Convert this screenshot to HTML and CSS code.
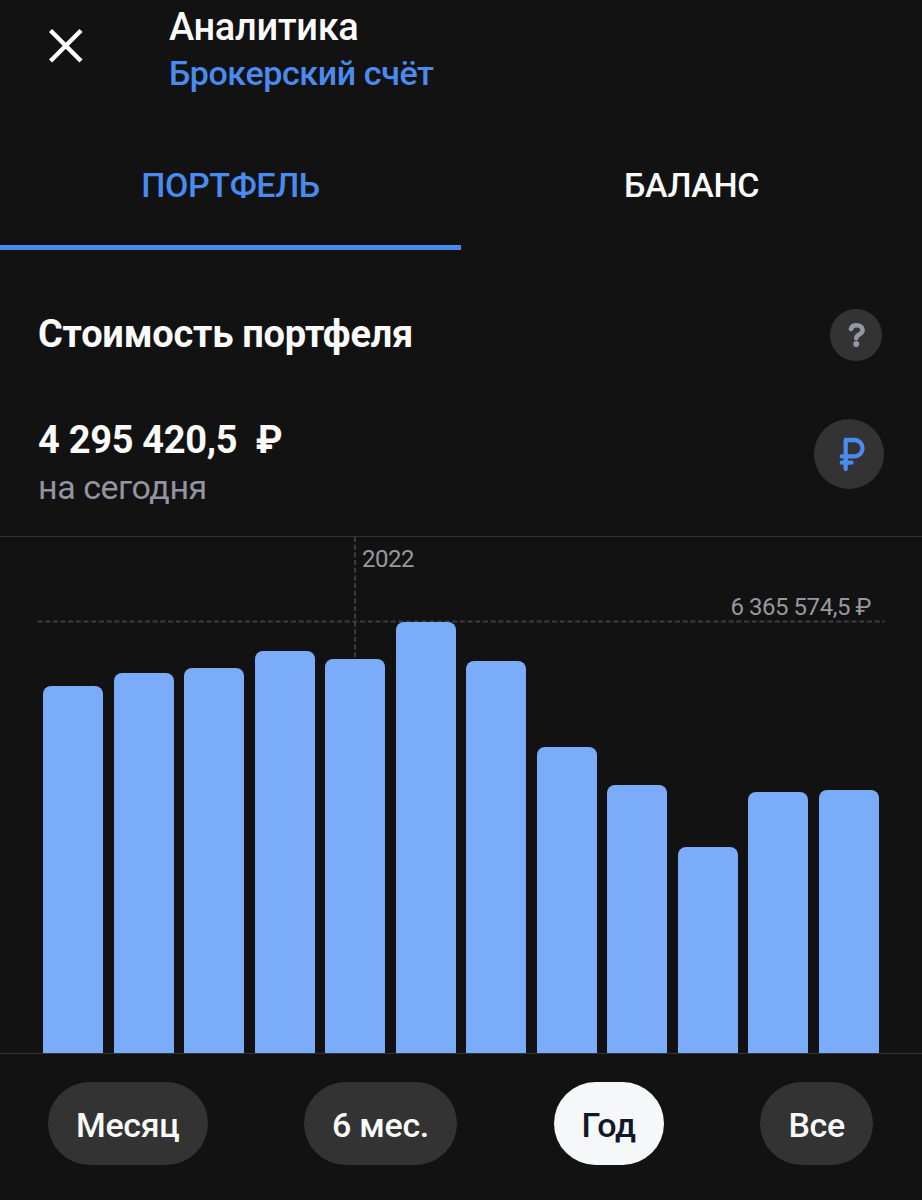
FILE: index.html
```html
<!DOCTYPE html>
<html lang="ru">
<head>
    <meta charset="UTF-8">
    <meta name="viewport" content="width=device-width, initial-scale=1.0">
    <title>Аналитика</title>
    <link rel="stylesheet" href="styles.css">
</head>
<body>

    <!-- Header -->
    <header class="header">
        <button type="button" class="close" aria-label="Закрыть">
            <svg width="34" height="34" viewBox="0 0 34 34">
                <path d="M1.5 1.5L32 32M32 1.5L1.5 32" stroke="#fff" stroke-width="4.4" fill="none"/>
            </svg>
        </button>
        <div>
            <h1>Аналитика</h1>
            <div class="account">Брокерский счёт</div>
        </div>
    </header>

    <!-- Tabs -->
    <nav class="tabs">
        <div class="tab active">ПОРТФЕЛЬ</div>
        <div class="tab">БАЛАНС</div>
    </nav>

    <!-- Portfolio value -->
    <section class="section-head">
        <h2>Стоимость портфеля</h2>
        <button type="button" class="help" aria-label="Справка">
            <svg width="52" height="52" viewBox="0 0 52 52">
                <path d="M20.9 20C21.7 17.4 23.8 16.2 26.3 16.2C30 16.2 32.6 18.2 32.6 21.2C32.6 25.2 26.2 25.4 26.2 29.2" stroke="#9299a2" stroke-width="4.6" stroke-linecap="round" fill="none"/>
                <circle cx="26.2" cy="35" r="3" fill="#9299a2"/>
            </svg>
        </button>
    </section>

    <section class="value-row">
        <div>
            <div class="value">4 295 420,5&nbsp; ₽</div>
            <div class="today">на сегодня</div>
        </div>
        <button type="button" class="currency" aria-label="Валюта">
            <svg width="70" height="70" viewBox="0 0 70 70">
                <path d="M31.7 50V21H40.3C45 21 48.5 24.5 48.5 29.2C48.5 33.9 45 37.4 40.3 37.4H27.8M27.8 43.7H37.5" stroke="#4a8bf0" stroke-width="4.3" stroke-linecap="round" stroke-linejoin="round" fill="none"/>
            </svg>
        </button>
    </section>

    <!-- Chart -->
    <section class="chart">
        <svg class="grid" width="922" height="516" viewBox="0 0 922 516">
            <line x1="355" y1="0" x2="355" y2="130"/>
            <line x1="37.5" y1="84.5" x2="884.5" y2="84.5"/>
        </svg>
        <span class="year">2022</span>
        <span class="max">6 365 574,5 ₽</span>
        <div class="bars">
            <div class="bar" style="height: 367px"></div>
            <div class="bar" style="height: 380.5px"></div>
            <div class="bar" style="height: 385.5px"></div>
            <div class="bar" style="height: 402.5px"></div>
            <div class="bar" style="height: 394px"></div>
            <div class="bar" style="height: 431.5px"></div>
            <div class="bar" style="height: 392px"></div>
            <div class="bar" style="height: 306px"></div>
            <div class="bar" style="height: 268.5px"></div>
            <div class="bar" style="height: 206px"></div>
            <div class="bar" style="height: 261px"></div>
            <div class="bar" style="height: 263.5px"></div>
        </div>
    </section>

    <!-- Period -->
    <div class="periods">
        <button type="button" class="period">Месяц</button>
        <button type="button" class="period">6 мес.</button>
        <button type="button" class="period selected">Год</button>
        <button type="button" class="period">Все</button>
    </div>

</body>
</html>
```

FILE: styles.css
```css
* {
    box-sizing: border-box;
}

body {
    margin: 0;
    width: 922px;
    height: 1200px;
    overflow: hidden;
    background-color: #121212;
    color: #fafafa;
    font-family: Roboto, sans-serif;
}

h1, h2 {
    margin: 0;
}

button {
    border: none;
    padding: 0;
    font-family: inherit;
    cursor: pointer;
}

svg {
    display: block;
}

.header {
    display: flex;
    height: 125px;
    padding-top: 3px;
}

.close {
    width: 169px;
    height: 86px;
    padding-left: 49px;
    background: none;
}

h1 {
    font-size: 38px;
    font-weight: 500;
    line-height: 48px;
    letter-spacing: -0.35px;
}

.account {
    color: #4a8bf0;
    font-size: 34px;
    font-weight: 500;
    line-height: 45px;
    letter-spacing: -0.4px;
}

.tabs {
    display: flex;
}

.tab {
    flex: 1;
    height: 125px;
    border-bottom: 5px solid transparent;
    font-size: 34px;
    font-weight: 500;
    line-height: 121px;
    letter-spacing: -0.4px;
    text-align: center;
}

.tab.active {
    color: #4a8bf0;
    border-color: #4a8bf0;
}

.section-head {
    display: flex;
    justify-content: space-between;
    align-items: center;
    height: 52px;
    margin-top: 59px;
    padding: 0 40px 0 38px;
}

h2 {
    padding-bottom: 2px;
    font-size: 38px;
    font-weight: 700;
    line-height: 48px;
    letter-spacing: -0.24px;
}

.help {
    width: 52px;
    height: 52px;
    border-radius: 50%;
    background-color: #333;
}

.value-row {
    display: flex;
    justify-content: space-between;
    height: 121px;
    margin-top: 54px;
    padding: 0 38px;
}

.value {
    font-size: 38px;
    font-weight: 700;
    line-height: 50px;
    letter-spacing: -0.3px;
}

.today {
    color: #9394a0;
    font-size: 34px;
    line-height: 45px;
    letter-spacing: -0.45px;
}

.currency {
    width: 70px;
    height: 70px;
    margin-top: 4px;
    border-radius: 50%;
    background-color: #333;
}

.chart {
    position: relative;
    height: 518px;
    border-top: 1px solid #333;
    border-bottom: 1px solid #333;
}

.grid {
    position: absolute;
    top: 0;
    left: 0;
}

.grid line {
    stroke: #3c3c3c;
    stroke-width: 2;
    stroke-dasharray: 5 2.68;
}

.year, .max {
    position: absolute;
    color: #97989f;
    font-size: 24px;
    line-height: 28px;
    letter-spacing: -0.45px;
}

.year {
    top: 8px;
    left: 362px;
}

.max {
    top: 56px;
    right: 51px;
}

.bars {
    position: relative;
    display: flex;
    align-items: flex-end;
    justify-content: space-between;
    height: 100%;
    padding: 0 43px;
}

.bar {
    width: 60px;
    border-radius: 8px 8px 0 0;
    background-color: #7aacfa;
}

.periods {
    display: flex;
    justify-content: space-between;
    padding: 28px 49px 0 48px;
}

.period {
    height: 83px;
    padding: 3px 28px 0;
    border-radius: 42px;
    background-color: #333;
    color: #fafafa;
    font-size: 34px;
    font-weight: 500;
    letter-spacing: -0.3px;
}

.period.selected {
    background-color: #f6f7f9;
    color: #101828;
}
```
